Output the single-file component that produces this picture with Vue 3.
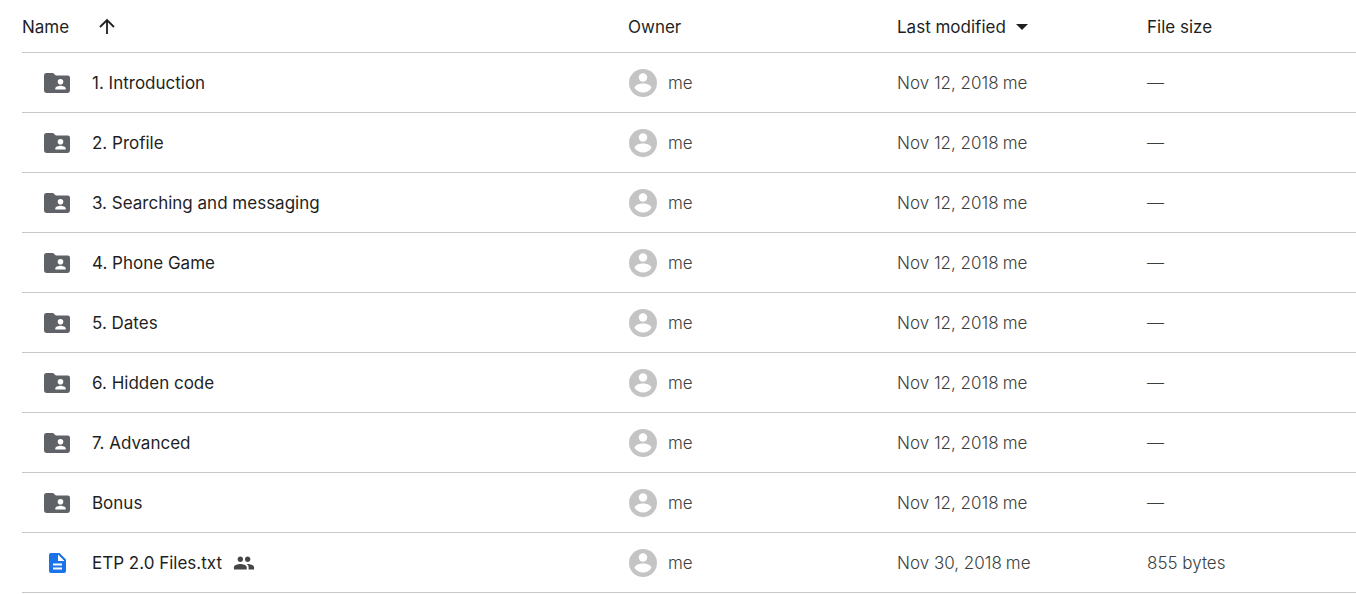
<script setup>
const rows = [
  ...['1. Introduction', '2. Profile', '3. Searching and messaging', '4. Phone Game', '5. Dates', '6. Hidden code', '7. Advanced', 'Bonus']
    .map(name => ({ name, folder: true, date: 'Nov 12, 2018', size: '—' })),
  { name: 'ETP 2.0 Files.txt', folder: false, date: 'Nov 30, 2018', size: '855 bytes' },
]
</script>

<template>
  <main>
    <table>
      <colgroup><col class="c-name"><col class="c-owner"><col class="c-date"><col class="c-size"></colgroup>
      <thead>
        <tr>
          <th scope="col">
            <span class="line">
              <button type="button">Name</button>
              <button type="button" class="arrow" aria-label="Reverse sort direction">
                <svg width="24" height="24" viewBox="0 0 24 24"><path d="M12 19V5M5 12l7-7 7 7" fill="none" stroke="#1f1f1f" stroke-width="1.8" /></svg>
              </button>
            </span>
          </th>
          <th scope="col"><button type="button">Owner</button></th>
          <th scope="col">
            <button type="button" class="modified">Last modified<svg width="12" height="6" viewBox="0 0 12 6"><path d="M0 0h12L6 6z" fill="#1f1f1f" /></svg></button>
          </th>
          <th scope="col"><button type="button">File size</button></th>
        </tr>
      </thead>
      <tbody>
        <tr v-for="row in rows" :key="row.name">
          <td>
            <span class="line file">
              <svg v-if="row.folder" width="26" height="20" viewBox="0 0 26 20"><path fill="#5f6368" d="M2.5 0h6.6l2.8 2.5h11.6A2.3 2.3 0 0 1 26 4.8v12.8a2.4 2.4 0 0 1-2.4 2.4H2.4A2.4 2.4 0 0 1 0 17.6V2.4A2.4 2.4 0 0 1 2.5 0z" /><circle cx="16.5" cy="8.7" r="2.8" fill="#fff" /><path fill="#fff" d="M11.3 16.6v-1.2c0-1.8 3.3-2.7 5.2-2.7s5.2.9 5.2 2.7v1.2z" /></svg>
              <svg v-else width="26" height="20" viewBox="0 0 26 20"><path fill="#1a73e8" fill-rule="evenodd" d="M7 0h8.5L22 6.5V18a2 2 0 0 1-2 2H7a2 2 0 0 1-2-2V2a2 2 0 0 1 2-2zm7 1.5V8h6.5zM9 10.5v2h9v-2zM9 14.5v2h9v-2z" /></svg>
              <span class="name">{{ row.name }}</span>
              <svg v-if="!row.folder" class="shared" width="22" height="22" viewBox="0 0 24 24" role="img" aria-label="Shared"><path fill="#444746" d="M16 11c1.66 0 2.99-1.34 2.99-3S17.66 5 16 5s-3 1.34-3 3 1.34 3 3 3zm-8 0c1.66 0 2.99-1.34 2.99-3S9.66 5 8 5 5 6.34 5 8s1.34 3 3 3zm0 2c-2.33 0-7 1.17-7 3.5V19h14v-2.5c0-2.33-4.67-3.5-7-3.5zm8 0c-.29 0-.62.02-.97.05 1.16.84 1.97 1.97 1.97 3.45V19h6v-2.5c0-2.33-4.67-3.5-7-3.5z" /></svg>
            </span>
          </td>
          <td>
            <span class="line owner">
              <svg width="30" height="30" viewBox="0 0 30 30"><circle cx="15" cy="15" r="14" fill="#c4c4c4" /><circle cx="15" cy="9.5" r="4.2" fill="#fff" /><path fill="#fff" d="M6.6 19.9c0-2.9 5.6-4.3 8.4-4.3s8.4 1.4 8.4 4.3a10.1 10.1 0 0 1-16.8 0z" /></svg>
              <span>me</span>
            </span>
          </td>
          <td><span class="line date"><span>{{ row.date }}</span><span>me</span></span></td>
          <td>{{ row.size }}</td>
        </tr>
      </tbody>
    </table>
  </main>
</template>

<style>
body { margin: 0; background: #fff; overflow: hidden; }
</style>

<style scoped>
main { padding-left: 22px; font-family: Inter, Roboto, sans-serif; font-size: 17px; line-height: 24px; color: #3c3f3e; }
table { width: 100%; table-layout: fixed; border-collapse: separate; border-spacing: 0; }
.c-owner { width: 269px; }
.c-date { width: 250px; }
.c-size { width: 209px; }
th, td { box-sizing: border-box; height: 60px; padding: 0; border-bottom: 1px solid #c7c7c7; text-align: left; font-weight: 300; white-space: nowrap; }
th { height: 53px; padding-top: 2px; color: #1f1f1f; font-weight: 400; }
button { padding: 0; border: 0; background: none; font: inherit; color: inherit; cursor: pointer; }
.line { display: flex; align-items: center; }
.arrow { display: flex; margin-left: 26px; }
.modified { display: flex; align-items: center; gap: 10px; }
.file { padding-left: 22px; }
.name { margin-left: 22px; color: #1f1f1f; font-weight: 400; }
.shared { margin-left: 11px; }
.owner { gap: 10px; }
.date { gap: 4px; }
</style>
